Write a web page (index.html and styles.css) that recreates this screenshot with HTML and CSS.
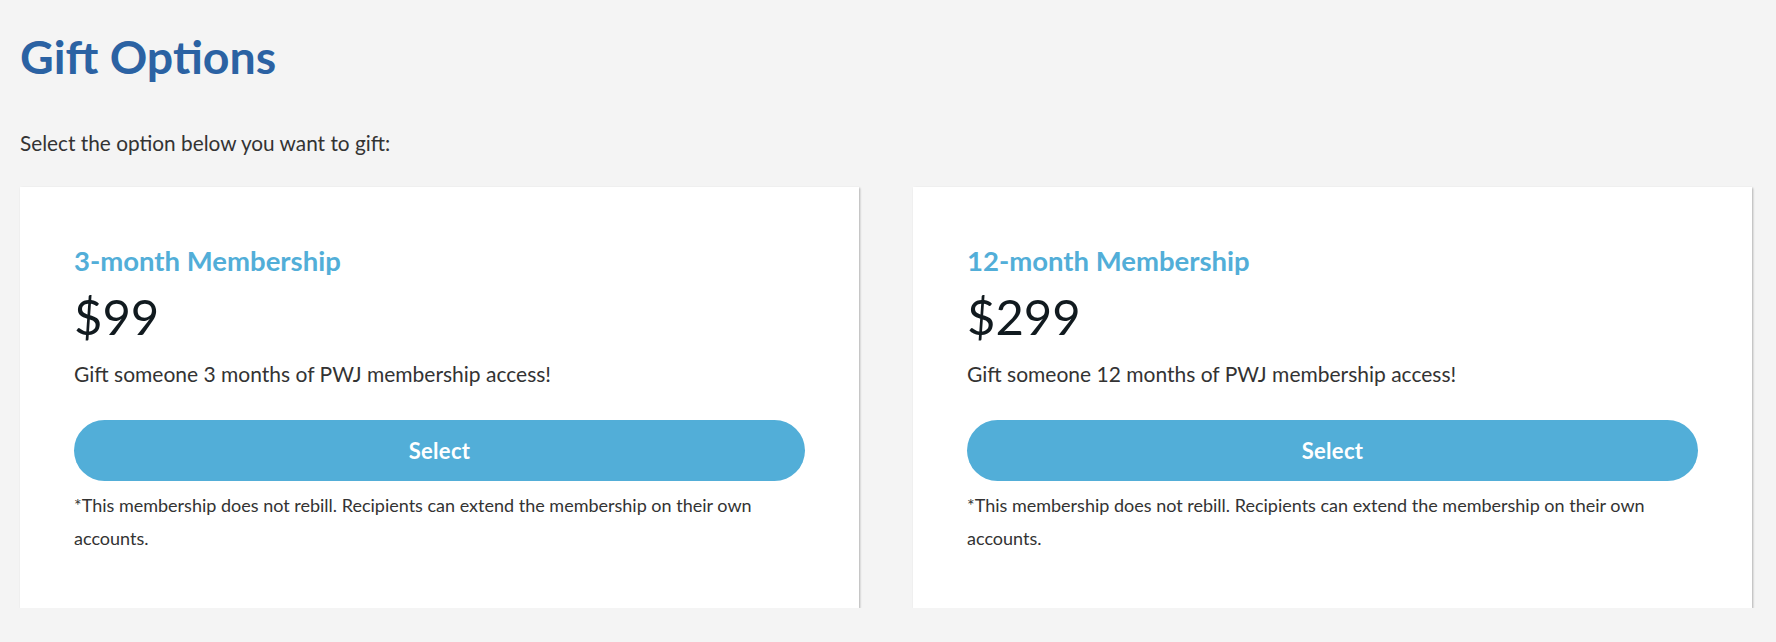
FILE: index.html
```html
<!DOCTYPE html>
<html lang="en">
<head>
<meta charset="utf-8">
<title>Gift Options</title>
<link rel="stylesheet" href="styles.css">
</head>
<body>
<main class="page">
  <h1 class="page-title">Gift Options</h1>
  <p class="intro">Select the option below you want to gift:</p>
  <div class="options">
    <section class="card">
      <h2 class="card-title">3-month Membership</h2>
      <div class="price">$99</div>
      <p class="desc">Gift someone 3 months of PWJ membership access!</p>
      <button class="select-btn" type="button">Select</button>
      <p class="note">*This membership does not rebill. Recipients can extend the membership on their own accounts.</p>
    </section>
    <section class="card">
      <h2 class="card-title">12-month Membership</h2>
      <div class="price">$299</div>
      <p class="desc">Gift someone 12 months of PWJ membership access!</p>
      <button class="select-btn" type="button">Select</button>
      <p class="note">*This membership does not rebill. Recipients can extend the membership on their own accounts.</p>
    </section>
  </div>
</main>
</body>
</html>
```
FILE: styles.css
```css
* { box-sizing: border-box; }
html, body { margin: 0; padding: 0; }
body {
  background: #f4f4f4;
  font-family: Lato, "Open Sans", "Liberation Sans", sans-serif;
  color: #333;
}
.page {
  padding: 28px 24px 0 20px;
}
.page-title {
  margin: 0;
  font-size: 46.5px;
  line-height: 56px;
  font-weight: 700;
  color: #2b62a3;
}
.intro {
  margin: 45px 0 0;
  font-size: 20.8px;
  line-height: 27px;
  color: #333;
}
.options {
  margin-top: 31px;
  display: grid;
  grid-template-columns: 1fr 1fr;
  column-gap: 54px;
}
.card {
  background: #fff;
  padding: 57px 54px 53px;
  box-shadow: 1px 1px 2px rgba(0, 0, 0, 0.28);
}
.card-title {
  margin: 0;
  font-size: 27.5px;
  line-height: 33px;
  font-weight: 700;
  color: #52aed8;
}
.price {
  margin-top: 10px;
  font-size: 49px;
  line-height: 58px;
  font-weight: 400;
  color: #111a1f;
}
.desc {
  margin: 15px 0 0;
  font-size: 21px;
  line-height: 27px;
  color: #333;
}
.select-btn {
  display: block;
  width: 100%;
  margin-top: 33px;
  height: 61px;
  border: 0;
  border-radius: 31px;
  background: #52aed8;
  color: #fff;
  font-family: inherit;
  font-size: 22px;
  letter-spacing: 0.3px;
  font-weight: 700;
  cursor: pointer;
}
.note {
  margin: 8px 0 0;
  font-size: 18px;
  line-height: 33px;
  color: #333;
}
```
